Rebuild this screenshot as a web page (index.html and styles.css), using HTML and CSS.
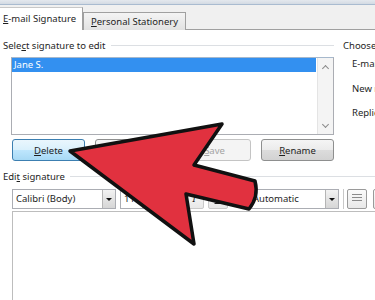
FILE: index.html
```html
<!DOCTYPE html>
<html lang="en">
<head>
    <meta charset="UTF-8">
    <meta name="viewport" content="width=device-width, initial-scale=1.0">
    <title>Signatures and Stationery</title>
    <link rel="stylesheet" href="styles.css">
</head>
<body>
    <div class="window">
        <div class="titlebar"></div>
        <div class="tabs">
            <div class="tab active"><u>E</u>-mail Signature</div>
            <div class="tab"><u>P</u>ersonal Stationery</div>
        </div>

        <div class="content">
            <div class="upper">
                <div class="select-col">
                    <div class="group-label"><span>Sele<u>c</u>t signature to edit</span></div>
                    <div class="listbox">
                        <div class="list-items">
                            <div class="list-item selected">Jane S.</div>
                        </div>
                        <div class="scrollbar">
                            <span class="chevron up"></span>
                            <span class="chevron down"></span>
                        </div>
                    </div>
                    <div class="buttons">
                        <button class="btn focused"><u>D</u>elete</button>
                        <button class="btn"><u>N</u>ew</button>
                        <button class="btn" disabled><u>S</u>ave</button>
                        <button class="btn"><u>R</u>ename</button>
                    </div>
                </div>
                <div class="default-col">
                    <div class="group-label plain"><span>Choose default signature</span></div>
                    <div class="default-row">E-mail account:</div>
                    <div class="default-row">New messages:</div>
                    <div class="default-row">Replies/forwards:</div>
                </div>
            </div>

            <div class="group-label wide"><span>Edi<u>t</u> signature</span></div>
            <div class="toolbar">
                <div class="combo font-combo"><span>Calibri (Body)</span><span class="drop"></span></div>
                <div class="combo size-combo"><span>11</span><span class="drop"></span></div>
                <div class="tool-btn"><b>B</b></div>
                <div class="tool-btn"><i>I</i></div>
                <div class="tool-btn"><u>U</u></div>
                <div class="combo color-combo"><span>Automatic</span><span class="drop"></span></div>
                <div class="separator"></div>
                <div class="tool-btn align"><span class="lines"></span></div>
                <div class="tool-btn align next"><span class="lines"></span></div>
            </div>
            <div class="editor"></div>
        </div>

        <!-- pointer drawn over the dialog -->
        <svg class="pointer" width="375" height="300" viewBox="0 0 375 300">
            <path d="M70,151 L222,124 L194,165 L255,181 Q259,197 249,209 L186,194 L194,244 Z"
                  fill="#e1313f" stroke="#111" stroke-width="3.5" stroke-linejoin="round"/>
        </svg>
    </div>
</body>
</html>
```

FILE: styles.css
```css
body {
    margin: 0;
    background-color: #fff;
    font-family: "Noto Sans", "Open Sans", sans-serif;
    font-size: 9.5px;
    color: #1e1e1e;
}
.window {
    position: relative;
    width: 375px;
    height: 300px;
    overflow: hidden;
}
.titlebar {
    height: 4px;
    background: linear-gradient(#e4e8ee, #d3dae3);
    border-bottom: 1px solid #a9bbd0;
}
.tabs {
    display: flex;
    align-items: flex-end;
    height: 24px;
    background-color: #f0f0f0;
    border-bottom: 1px solid #a0a0a0;
}
.tab {
    box-sizing: border-box;
    height: 18px;
    line-height: 17px;
    padding: 0 7px;
    margin-bottom: -1px;
    background: linear-gradient(#f4f4f4, #e2e2e2);
    border: 1px solid #a0a0a0;
    border-bottom: none;
}
.tab.active {
    height: 23px;
    line-height: 22px;
    width: 83px;
    padding: 0 3px;
    background: #fff;
    border-left: none;
    border-right: 1px solid #a0a0a0;
    border-top: 1px solid #c8c8c8;
}
.content {
    padding-top: 8px;
}
.upper {
    display: flex;
}
.select-col {
    flex: none;
    width: 334px;
}
.group-label {
    display: flex;
    align-items: center;
    height: 14px;
    padding-left: 3px;
    white-space: nowrap;
}
.group-label::after {
    content: "";
    flex: 1;
    margin-left: 5px;
    border-top: 1px solid #dcdfe3;
}
.group-label.plain::after {
    display: none;
}
.listbox {
    display: flex;
    box-sizing: border-box;
    height: 78px;
    margin: 5px 0 0 11px;
    border: 1px solid #abadb3;
    border-top-color: #a6b8cc;
}
.list-items {
    flex: 1;
}
.list-item {
    height: 14px;
    line-height: 13px;
    padding-left: 2px;
}
.list-item.selected {
    background-color: #3390f0;
    color: #fff;
}
.scrollbar {
    display: flex;
    flex-direction: column;
    justify-content: space-between;
    align-items: center;
    width: 15px;
    padding: 6px 0 5px;
    margin-left: 1px;
    background-color: #f4f4f4;
    border-left: 1px solid #e4e4e4;
}
.chevron {
    width: 4px;
    height: 4px;
    border-left: 1px solid #8a8a8a;
    border-top: 1px solid #8a8a8a;
}
.chevron.up {
    transform: translateY(2px) rotate(45deg);
}
.chevron.down {
    transform: translateY(-2px) rotate(225deg);
}
.buttons {
    display: flex;
    justify-content: space-between;
    margin: 4px 0 0 12px;
}
.btn {
    box-sizing: border-box;
    width: 73px;
    height: 22px;
    padding: 0;
    font-family: inherit;
    font-size: 9.5px;
    color: #1e1e1e;
    background: linear-gradient(#f5f5f5 0%, #ebebeb 50%, #dcdcdc 51%, #d2d2d2 100%);
    border: 1px solid #8e8f8f;
    border-radius: 3px;
}
.btn.focused {
    background: linear-gradient(#eaf6fd 0%, #d9f0fc 50%, #bee6fd 51%, #a7d9f5 100%);
    border-color: #3c7fb1;
}
.btn:disabled {
    color: #a3a3a3;
    background: #f4f4f4;
    border-color: #c4c4c4;
}
.default-col {
    flex: none;
    padding-left: 9px;
}
.default-col .group-label {
    padding-left: 0;
}
.default-row {
    height: 24.5px;
    line-height: 14px;
    padding-left: 9px;
    white-space: nowrap;
}
.default-col .group-label + .default-row {
    margin-top: 5px;
}
.group-label.wide {
    margin-top: 8px;
}
.toolbar {
    display: flex;
    align-items: center;
    height: 21px;
    margin: 5px 0 0 12px;
    white-space: nowrap;
}
.combo {
    display: flex;
    flex: none;
    box-sizing: border-box;
    height: 20px;
    line-height: 18px;
    border: 1px solid #abadb3;
    background: #fff;
}
.combo span:first-child {
    flex: 1;
    padding-left: 3px;
}
.drop {
    position: relative;
    width: 12px;
    background: linear-gradient(#f2f2f2, #d6d6d6);
    border-left: 1px solid #b5b5b5;
}
.drop::after {
    content: "";
    position: absolute;
    left: 3px;
    top: 8px;
    border-left: 3px solid transparent;
    border-right: 3px solid transparent;
    border-top: 3px solid #111;
}
.font-combo {
    width: 104px;
}
.size-combo {
    width: 36px;
    margin-left: 4px;
}
.tool-btn {
    flex: none;
    box-sizing: border-box;
    width: 20px;
    height: 20px;
    margin-left: 4px;
    line-height: 18px;
    text-align: center;
    border: 1px solid #c9c9c9;
    border-radius: 2px;
    background: linear-gradient(#fafafa, #e8e8e8);
}
.color-combo {
    width: 90px;
    margin-left: 21px;
}
.separator {
    flex: none;
    width: 1px;
    height: 20px;
    margin-left: 4px;
    background: #c8c8c8;
}
.tool-btn.align {
    margin-left: 3px;
    padding: 4px 0 0 4px;
    border-color: #9a9a9a;
}
.tool-btn.align.next {
    margin-left: 6px;
}
.lines {
    display: block;
    width: 10px;
    height: 8px;
    background: repeating-linear-gradient(#8a8a8a 0 1px, transparent 1px 3px);
}
.editor {
    height: 100px;
    margin: 2px 0 0 12px;
    border-left: 1px solid #bdbdbd;
    border-top: 1px solid #bdbdbd;
}
.pointer {
    position: absolute;
    left: 0;
    top: 0;
    pointer-events: none;
}
```
